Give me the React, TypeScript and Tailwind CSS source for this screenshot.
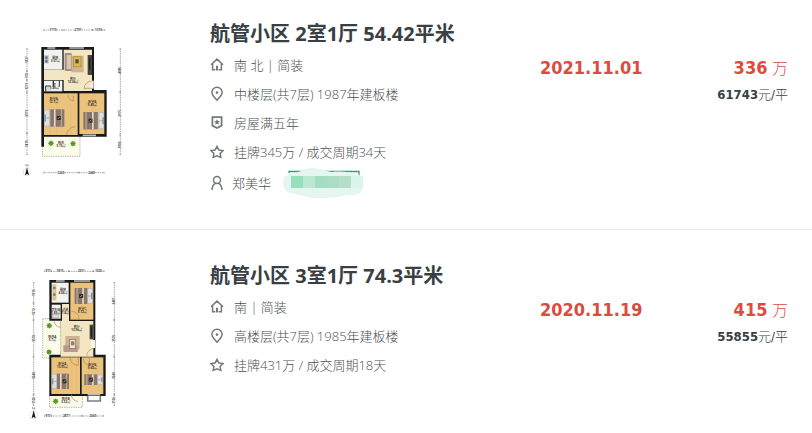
import type { ReactNode } from 'react'

interface Deal {
  id: string
  title: string
  house: string
  position: string
  taxTag?: string
  cycle: string
  agent?: string
  date: string
  totalPrice: string
  unitPrice: string
  plan: ReactNode
}

interface BoxProps {
  x: number
  y: number
  w: number
  h: number
}

function Room({ x, y, w, h, fill }: BoxProps & { fill: string }) {
  return <rect x={x} y={y} width={w} height={h} fill={fill} />
}

function Balcony({ x, y, w, h }: BoxProps) {
  return (
    <rect x={x} y={y} width={w} height={h} fill="#fafbe9" stroke="#8b8b8b" strokeWidth={2} strokeDasharray="4 3" />
  )
}

function Bed({ x, y, w, h, flip = false }: BoxProps & { flip?: boolean }) {
  const pillowX = flip ? x + w - 14 : x + 2
  return (
    <g>
      <rect x={x} y={y} width={w} height={h} fill="#c9bcae" />
      <rect x={flip ? x : x + w * 0.3} y={y} width={w * 0.7} height={h} fill="#8a7668" />
      <rect x={x + w * (flip ? 0.42 : 0.48)} y={y} width={5} height={h} fill="#e4d9c9" />
      <rect x={x + w * (flip ? 0.1 : 0.82)} y={y} width={4} height={h} fill="#bba796" />
      <rect x={pillowX} y={y + 3} width={12} height={h / 2 - 5} rx={4} fill="#d9e2e4" />
      <rect x={pillowX} y={y + h / 2 + 2} width={12} height={h / 2 - 5} rx={4} fill="#d9e2e4" />
      <rect x={flip ? pillowX + 9 : x} y={y + h * 0.3} width={5} height={h * 0.4} fill="#7d9cac" />
      <rect x={x + w * (flip ? 0.25 : 0.62)} y={y + h / 2 - 6} width={12} height={12} fill="#2d2a27" />
      <path
        d={`M${x + w * (flip ? 0.25 : 0.62) + 3} ${y + h / 2 + 3}l6 -6`}
        stroke="#ddd"
        strokeWidth={2}
      />
    </g>
  )
}

function Plant({ x, y }: { x: number; y: number }) {
  return (
    <g fill="#67a83a">
      <circle cx={x} cy={y} r={7} />
      <path
        d={`M${x} ${y - 9}v18M${x - 9} ${y}h18M${x - 6} ${y - 6}l12 12M${x + 6} ${y - 6}l-12 12`}
        stroke="#4f9427"
        strokeWidth={2}
      />
    </g>
  )
}

function Compass({ x, y }: { x: number; y: number }) {
  return (
    <g>
      <circle cx={x} cy={y} r={12} fill="none" stroke="#dcdcdc" strokeWidth={2} />
      <path d={`M${x} ${y - 14}l6 24l-6 -4l-6 4z`} fill="#151515" />
      <path d={`M${x - 3} ${y - 17}v-6l6 6v-6`} fill="none" stroke="#777" strokeWidth={2} />
    </g>
  )
}

function RoomLabel({ x, y, name, area }: { x: number; y: number; name: string; area: string }) {
  return (
    <text x={x} y={y} textAnchor="middle" fontSize={9} fontWeight={700} fill="#3a352c">
      {name}
      <tspan x={x} dy={9}>
        {area}
      </tspan>
    </text>
  )
}

function DimH({ y, from, to, value }: { y: number; from: number; to: number; value: string }) {
  const mid = (from + to) / 2
  return (
    <g>
      <path
        d={`M${from} ${y}H${mid - 10}M${mid + 10} ${y}H${to}M${from + 2} ${y - 3}v6M${to - 2} ${y - 3}v6`}
        stroke="#888"
        strokeWidth={2}
        strokeDasharray="5 2"
      />
      <text x={mid} y={y + 3} textAnchor="middle" fontSize={9} fontWeight={700} fill="#444">
        {value}
      </text>
    </g>
  )
}

function DimV({ x, from, to, value }: { x: number; from: number; to: number; value: string }) {
  const mid = (from + to) / 2
  return (
    <g>
      <path
        d={`M${x} ${from}V${mid - 10}M${x} ${mid + 10}V${to}M${x - 3} ${from + 2}h6M${x - 3} ${to - 2}h6`}
        stroke="#888"
        strokeWidth={2}
        strokeDasharray="5 2"
      />
      <text
        x={x}
        y={mid + 3}
        textAnchor="middle"
        fontSize={9}
        fontWeight={700}
        fill="#444"
        transform={`rotate(-90 ${x} ${mid})`}
      >
        {value}
      </text>
    </g>
  )
}

const WALL = '#17191a'
const WOOD = '#ecc37c'
const TILE = '#f3e6c2'
const PLAIN = '#f2f2ee'

function TwoRoomPlan() {
  return (
    <svg viewBox="0 15 390 480" className="h-[160px] w-[130px]" role="img" aria-label="户型图">
      <DimH y={45} from={100} to={158} value="1719" />
      <DimH y={45} from={160} to={248} value="2791" />
      <DimH y={45} from={246} to={285} value="1310" />
      <DimV x={51} from={100} to={168} value="1837" />
      <DimV x={51} from={168} to={195} value="970" />
      <DimV x={51} from={195} to={232} value="1279" />
      <DimV x={51} from={232} to={358} value="3975" />
      <DimV x={51} from={352} to={420} value="1415" />
      <DimV x={331} from={100} to={232} value="4086" />
      <DimV x={331} from={232} to={358} value="3975" />
      <DimV x={331} from={360} to={420} value="1800" />
      <DimH y={473} from={100} to={206} value="3265" />
      <DimH y={473} from={206} to={284} value="2445" />

      <Balcony x={97} y={361} w={113} h={63} />
      <path d="M94 96H252V225H290V365H102V395H94Z" fill={WALL} />
      <Room x={102} y={104} w={55} h={60} fill={PLAIN} />
      <path d="M161 104H246V228H161V195H102V164H161Z" fill={TILE} />
      <Room x={102} y={197} w={55} h={32} fill={PLAIN} />
      <Room x={102} y={235} w={101} h={125} fill={WOOD} />
      <Room x={208} y={235} w={75} h={122} fill={WOOD} />
      <path d="M120 235V360M140 235V360M182 235V360M228 235V357M248 235V357" stroke="#dfb36a" strokeWidth={1} />

      <path d="M112 99h24M178 99h44M218 361h40" stroke="#b9bdbd" strokeWidth={5} />
      <path d="M246 197v24" stroke="#f7f1dc" strokeWidth={10} />
      <path d="M246 198a24 24 0 0 0 -24 22h24M190 242v16a18 18 0 0 1 -16 -18M196 335a26 26 0 0 0 -26 24" fill="none" stroke="#a88b5c" strokeWidth={2} />

      <Room x={103} y={121} w={13} h={24} fill="#b3bdc0" />
      <circle cx={109} cy={128} r={4} fill="#58788c" />
      <circle cx={109} cy={139} r={4} fill="#58788c" />
      <Room x={128} y={197} w={4} h={18} fill="#333" />
      <Room x={109} y={215} w={16} h={12} fill="#d4d8d8" />
      <path d="M107 229V213h15M148 197v18" fill="none" stroke="#333" strokeWidth={3} />

      <rect x={184} y={122} width={37} height={50} fill="#cdb392" />
      <rect x={164} y={114} width={21} height={54} rx={3} fill="#a58c7d" />
      <rect x={170} y={120} width={13} height={42} fill="#d7c6b6" />
      <rect x={190} y={125} width={23} height={30} fill="#dfb550" stroke="#b58a2d" strokeWidth={2} />
      <rect x={196} y={133} width={10} height={12} fill="#53504a" />
      <rect x={233} y={120} width={13} height={60} fill="#46433f" />
      <path d="M239 130v34" stroke="#222" strokeWidth={4} />

      <Bed x={103} y={283} w={60} h={52} />
      <Bed x={220} y={291} w={62} h={52} flip />
      <Plant x={123} y={385} />
      <Plant x={189} y={386} />

      <RoomLabel x={136} y={131} name="厨房" area="3.57㎡" />
      <RoomLabel x={189} y={196} name="客厅" area="12.06㎡" />
      <RoomLabel x={133} y={213} name="卫" area="1.89㎡" />
      <RoomLabel x={131} y={256} name="卧室A" area="12.7㎡" />
      <RoomLabel x={247} y={264} name="卧室B" area="9.49㎡" />
      <RoomLabel x={153} y={386} name="阳台" area="5.15㎡" />
      <Compass x={51} y={471} />
    </svg>
  )
}

function ThreeRoomPlan() {
  return (
    <svg viewBox="-30 6 390 480" className="h-[160px] w-[130px]" role="img" aria-label="户型图">
      <DimH y={34} from={72} to={96} value="917" />
      <DimH y={34} from={92} to={148} value="1815" />
      <DimH y={34} from={146} to={222} value="2351" />
      <DimH y={34} from={218} to={254} value="1025" />
      <DimV x={41} from={66} to={130} value="1915" />
      <DimV x={41} from={130} to={180} value="1572" />
      <DimV x={41} from={180} to={290} value="3570" />
      <DimV x={41} from={290} to={404} value="3540" />
      <DimV x={41} from={404} to={438} value="1126" />
      <DimV x={283} from={66} to={180} value="3487" />
      <DimV x={283} from={180} to={290} value="3570" />
      <DimV x={283} from={290} to={404} value="3540" />
      <DimV x={283} from={404} to={438} value="1126" />
      <DimH y={468} from={72} to={96} value="917" />
      <DimH y={468} from={92} to={186} value="2877" />
      <DimH y={468} from={186} to={252} value="2065" />

      <Balcony x={68} y={176} w={56} h={118} />
      <Balcony x={89} y={402} w={98} h={40} />
      <path d="M203 403v20h38v-20" fill="#fff" stroke="#777d82" strokeWidth={5} />
      <path d="M88 60H226V284H257V408H88V284H122V182H88Z" fill={WALL} />
      <Room x={95} y={68} w={51} h={60} fill={PLAIN} />
      <Room x={95} y={134} w={27} h={42} fill={PLAIN} />
      <Room x={151} y={68} w={69} h={111} fill={WOOD} />
      <path d="M126 132H147V183H220V290H122V182H126Z" fill={TILE} />
      <Room x={94} y={292} w={86} h={110} fill={WOOD} />
      <Room x={185} y={292} w={65} h={110} fill={WOOD} />
      <path d="M165 68V179M185 68V179M110 292V402M155 292V402M170 292V402M205 292V402M235 292V402" stroke="#dfb36a" strokeWidth={1} />

      <path d="M108 63h26M162 63h48M203 404h38" stroke="#b9bdbd" strokeWidth={5} />
      <path d="M219 240v24" stroke="#faf5e2" strokeWidth={12} />
      <path d="M122 205v70" stroke="#d8d4c0" strokeWidth={4} strokeDasharray="8 4" />
      <path d="M178 176a24 24 0 0 0 -24 -22M152 178h26M222 265a24 24 0 0 0 -22 22M175 294v22a24 24 0 0 1 -25 -22M190 294a20 20 0 0 0 18 22v-22M174 424a20 20 0 0 1 -20 -20M103 184a20 20 0 0 0 18 18" fill="none" stroke="#a88b5c" strokeWidth={2} />

      <Room x={97} y={73} w={12} h={48} fill="#dbc493" />
      <circle cx={103} cy={84} r={4} fill="#7d786d" />
      <circle cx={103} cy={104} r={4} fill="#7d786d" />
      <rect x={97} y={164} width={18} height={10} fill="#d5dada" stroke="#777" />

      <rect x={136} y={228} width={43} height={40} fill="#cdb392" />
      <rect x={130} y={256} width={44} height={20} rx={3} fill="#b49b8b" />
      <rect x={149} y={238} width={18} height={28} fill="#eee4d4" stroke="#806852" strokeWidth={2} />
      <rect x={153} y={244} width={10} height={12} fill="#8b8171" />
      <rect x={209} y={194} width={11} height={44} fill="#46433f" />
      <path d="M214 201v30" stroke="#222" strokeWidth={4} />

      <Bed x={164} y={84} w={54} h={48} flip />
      <Bed x={95} y={341} w={52} h={46} />
      <Bed x={193} y={343} w={55} h={32} flip />
      <Plant x={88} y={197} />
      <Plant x={87} y={276} />
      <Plant x={107} y={424} />

      <RoomLabel x={129} y={94} name="厨房" area="4.06㎡" />
      <RoomLabel x={187} y={149} name="卧室C" area="9.12㎡" />
      <RoomLabel x={107} y={152} name="卫生间" area="1.89㎡" />
      <RoomLabel x={136} y={152} name="过道" area="1.4㎡" />
      <RoomLabel x={170} y={204} name="客厅" area="13.96㎡" />
      <RoomLabel x={97} y={234} name="阳台A" area="5.7㎡" />
      <RoomLabel x={127} y={316} name="卧室A" area="13.55㎡" />
      <RoomLabel x={217} y={318} name="卧室B" area="9.60㎡" />
      <RoomLabel x={137} y={421} name="阳台B" area="3.52㎡" />
      <Compass x={41} y={465} />
    </svg>
  )
}

function Icon({ children }: { children: ReactNode }) {
  return (
    <svg
      viewBox="0 0 14 16"
      className="h-4 w-3.5 shrink-0"
      fill="none"
      stroke="#74797b"
      strokeWidth={1.5}
      aria-hidden="true"
    >
      {children}
    </svg>
  )
}

function HouseIcon() {
  return (
    <Icon>
      <path d="M1 7.7L7 2.1L13 7.7M2.6 7V12.8H5.3M11.4 7V12.8H8.7" />
      <path d="M7 8.8V13.5" strokeWidth={2} />
    </Icon>
  )
}

function PinIcon() {
  return (
    <Icon>
      <path d="M7 14.2C4.4 11.6 1.9 9 1.9 6.3a5.1 5.1 0 0 1 10.2 0C12.1 9 9.6 11.6 7 14.2Z" />
      <circle cx={7} cy={6.6} r={1.3} fill="#74797b" stroke="none" />
    </Icon>
  )
}

function ShieldIcon() {
  return (
    <Icon>
      <path d="M2.4 2.2H11.6V10.6L7 13L2.4 10.6Z" strokeWidth={1.8} />
      <path d="M7 4.2l.9 1.8l2 .3l-1.5 1.4l.4 2L7 8.8l-1.8.9l.4-2l-1.5-1.4l2-.3Z" fill="#74797b" stroke="none" />
    </Icon>
  )
}

function StarIcon() {
  return (
    <Icon>
      <path d="M7 2.4L8.9 6L13 6.6L10.1 9.4L10.8 13.4L7 11.8L3.2 13.4L3.9 9.4L1 6.6L5.1 6Z" />
    </Icon>
  )
}

function AgentIcon() {
  return (
    <Icon>
      <circle cx={7} cy={5} r={3.5} />
      <path d="M2.1 15C2.1 11.6 3.6 9.4 5.4 8.2M11.9 15C11.9 11.6 10.4 9.4 8.6 8.2" />
    </Icon>
  )
}

function MaskedContact() {
  return (
    <svg viewBox="0 0 80 30" className="h-[30px] w-20" aria-hidden="true">
      <path d="M6 5V3.5H76V8" fill="none" stroke="#1fa974" strokeWidth={1.3} />
      <path
        d="M0 15C0 9 4 5 12 5C18 4 20 0 30 0C38 0 42 3 49 4C58 3 68 4 74 6C80 8 80 12 80 17C80 25 76 28 66 27C54 29 42 31 29 30C22 29 18 27 12 26C4 25 0 22 0 15Z"
        fill="#e5f6f0"
      />
      <path d="M68 8h12v12H68z" fill="#dbf4ec" />
      <path d="M8 8h12v12H8z" fill="#98dfbe" />
      <path d="M20 8h12v12H20z" fill="#bce7d4" />
      <path d="M32 8h12v12H32z" fill="#a3ddc2" />
      <path d="M44 8h12v12H44z" fill="#abddc5" />
      <path d="M56 8h12v12H56z" fill="#b5dfcb" />
    </svg>
  )
}

function InfoRow({ icon, children }: { icon: ReactNode; children: ReactNode }) {
  return (
    <li className="flex h-[29px] items-center gap-2.5">
      {icon}
      <span>{children}</span>
    </li>
  )
}

function DealItem({ deal }: { deal: Deal }) {
  return (
    <li className="flex border-b border-[#ececec] pt-8 pb-[30px] first:pt-5 last:border-b-0 last:pb-2">
      <a href="#" className="w-[210px] shrink-0 pl-2.5">
        {deal.plan}
      </a>
      <div className="min-w-0 flex-1">
        <h2 className="text-xl leading-7 font-bold whitespace-nowrap text-[#394043]">
          <a href="#">{deal.title}</a>
        </h2>
        <ul className="mt-0.5 text-[13px] leading-5 font-light whitespace-nowrap text-[#4c5154]">
          <InfoRow icon={<HouseIcon />}>{deal.house}</InfoRow>
          <InfoRow icon={<PinIcon />}>{deal.position}</InfoRow>
          {deal.taxTag && <InfoRow icon={<ShieldIcon />}>{deal.taxTag}</InfoRow>}
          <InfoRow icon={<StarIcon />}>{deal.cycle}</InfoRow>
          {deal.agent && (
            <li className="flex h-[33px] items-center gap-2">
              <AgentIcon />
              <span>{deal.agent}</span>
              <span className="ml-1">
                <MaskedContact />
              </span>
            </li>
          )}
        </ul>
      </div>
      <div className="w-[148px] shrink-0 pt-9 font-['DejaVu_Sans_Condensed','Noto_Sans_CJK_SC',sans-serif] text-lg leading-6 font-bold text-[#db4c3f]">
        {deal.date}
      </div>
      <div className="mr-6 w-[100px] shrink-0 pt-9 text-right font-['DejaVu_Sans_Condensed','Noto_Sans_CJK_SC',sans-serif] font-light whitespace-nowrap">
        <div className="text-lg leading-6 text-[#db4c3f]">
          <span className="font-bold">{deal.totalPrice}</span>
          <span className="text-base"> 万</span>
        </div>
        <div className="mt-0.5 text-[13px] leading-6 text-[#394043]">
          <span className="font-bold">{deal.unitPrice}</span>元/平
        </div>
      </div>
    </li>
  )
}

const deals: Deal[] = [
  {
    id: 'two-room',
    title: '航管小区 2室1厅 54.42平米',
    house: '南 北 | 简装',
    position: '中楼层(共7层) 1987年建板楼',
    taxTag: '房屋满五年',
    cycle: '挂牌345万 / 成交周期34天',
    agent: '郑美华',
    date: '2021.11.01',
    totalPrice: '336',
    unitPrice: '61743',
    plan: <TwoRoomPlan />,
  },
  {
    id: 'three-room',
    title: '航管小区 3室1厅 74.3平米',
    house: '南 | 简装',
    position: '高楼层(共7层) 1985年建板楼',
    cycle: '挂牌431万 / 成交周期18天',
    date: '2020.11.19',
    totalPrice: '415',
    unitPrice: '55855',
    plan: <ThreeRoomPlan />,
  },
]

export default function App() {
  return (
    <main className="min-h-screen bg-white font-['Open_Sans','Noto_Sans_CJK_SC',sans-serif]">
      <ul>
        {deals.map((deal) => (
          <DealItem key={deal.id} deal={deal} />
        ))}
      </ul>
    </main>
  )
}
